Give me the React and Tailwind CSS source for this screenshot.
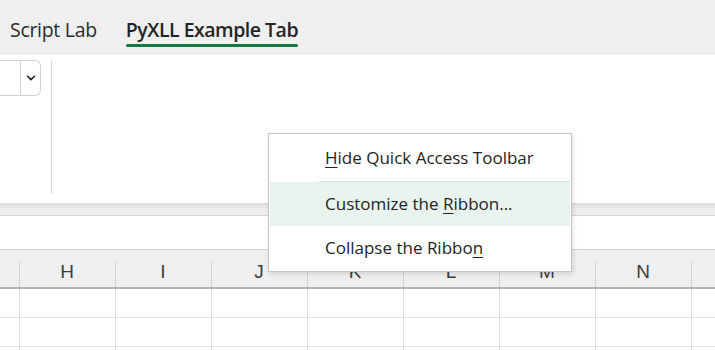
import React from 'react'

const columns = ['H', 'I', 'J', 'K', 'L', 'M', 'N', '']

function U({ children }) {
  return <span className="underline decoration-1 underline-offset-[3px]">{children}</span>
}

export default function App() {
  return (
    <div className="relative h-[350px] w-[715px] overflow-hidden bg-white font-['Open_Sans',sans-serif] text-[#242424]">
      {/* tab strip */}
      <div className="flex h-[54px] items-start gap-[29px] border-b border-[#e2e2e2] bg-[#efefef] pl-[10px] pt-[17px] text-[19.5px]">
        <span className="leading-[26px] tracking-[-0.3px] text-[#2b2b2b]">Script Lab</span>
        <span className="flex flex-col font-semibold leading-[26px] tracking-[-0.5px]">
          PyXLL Example Tab
          <span className="mt-[1px] h-[3px] rounded-full bg-[#107c41]" />
        </span>
      </div>

      {/* ribbon body */}
      <div className="flex h-[149px] items-start">
        <div className="mt-[6px] flex h-[36px] w-[41px] items-stretch rounded-r-[6px] border border-l-0 border-[#d1d1d1]">
          <div className="w-[21px] border-r border-[#d1d1d1]" />
          <div className="flex flex-1 items-center justify-center">
            <svg width="10" height="6" viewBox="0 0 10 6">
              <path d="M1.5 1.2 5 4.6 8.5 1.2" fill="none" stroke="#242424" strokeWidth="1.6" strokeLinecap="round" strokeLinejoin="round" />
            </svg>
          </div>
        </div>
        <div className="ml-[10px] mt-[7px] h-[133px] w-px bg-[#d6d6d6]" />
      </div>

      {/* ribbon shadow band */}
      <div className="h-[13px] border-b border-[#d6d6d6] bg-gradient-to-b from-[#dcdcdc] via-[#ececec] to-[#eeeeee]" />

      {/* formula bar */}
      <div className="h-[34px] border-b border-[#d4d4d4] bg-white" />

      {/* column header */}
      <div className="flex h-[39px] border-b-2 border-[#b4b4b4] bg-[#efefef]">
        <div className="w-[19px] shrink-0" />
        {columns.map((c, i) => (
          <div key={i} className="flex w-[96px] shrink-0">
            <div className="mt-[12px] w-px bg-[#d4d4d4]" />
            <div className="flex flex-1 items-center justify-center pt-[8px] pr-px font-['Liberation_Sans',sans-serif] text-[19px] font-light text-[#3d3d3d]">
              {c}
            </div>
          </div>
        ))}
      </div>

      {/* grid */}
      {[0, 1, 2].map((r) => (
        <div key={r} className="flex h-[29px] border-b border-[#e1e1e1]">
          <div className="w-[19px] shrink-0" />
          {columns.map((c, i) => (
            <div key={i} className="w-[96px] shrink-0 border-l border-[#e1e1e1]" />
          ))}
        </div>
      ))}

      {/* context menu */}
      <div className="absolute left-[268px] top-[133px] w-[304px] border border-[#c6c6c6] bg-white p-px text-[17px] text-[#242424] shadow-[1px_2px_5px_rgba(0,0,0,0.13)]">
        <div className="flex h-[46px] items-center pl-[55px]">
          <span><U>H</U>ide Quick Access Toolbar</span>
        </div>
        <div className="ml-[49px] h-px bg-[#dcdcdc]" />
        <div className="flex h-[44px] items-center bg-[#e9f3ee] pl-[55px]">
          <span>Customize the <U>R</U>ibbon...</span>
        </div>
        <div className="flex h-[44px] items-center pl-[55px]">
          <span>Collapse the Ribbo<U>n</U></span>
        </div>
      </div>
    </div>
  )
}
